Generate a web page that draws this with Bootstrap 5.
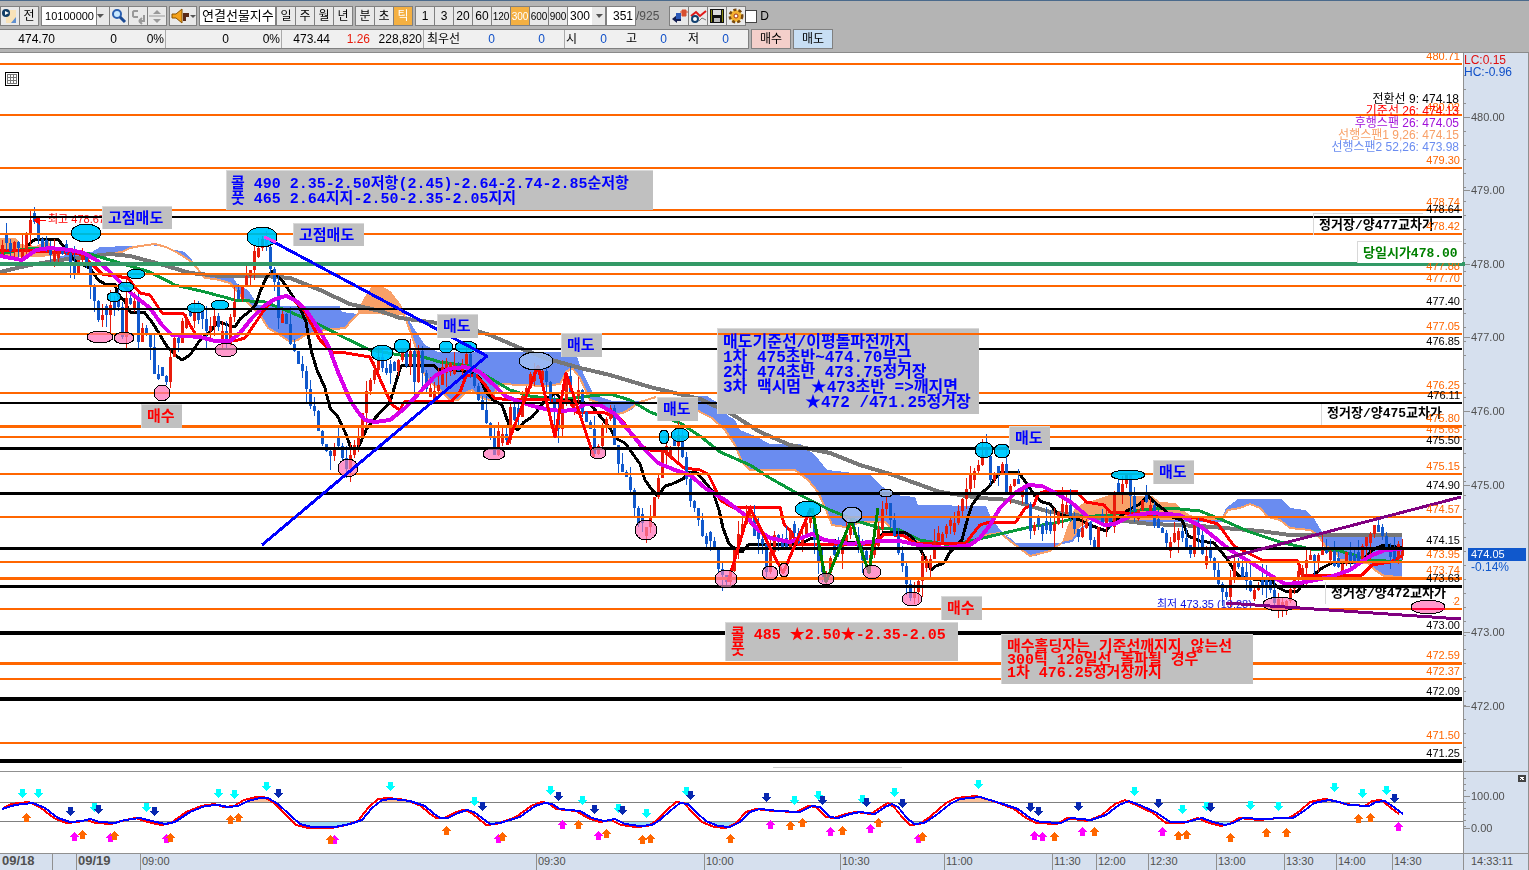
<!DOCTYPE html>
<html lang="ko">
<head>
<meta charset="utf-8">
<meta name="viewport" content="width=device-width, initial-scale=1">
<title>연결선물지수</title>
<link rel="stylesheet" href="https://cdn.jsdelivr.net/npm/bootstrap@5.3.0/dist/css/bootstrap.min.css">
<style>
body{font-family:"Liberation Sans Narrow","Liberation Sans","Noto Sans CJK KR",sans-serif;font-size:12px;line-height:16px;background:#fff;color:#000}
.topbar{background:#b4b4b4;border-top:1px solid #4a6a8c;border-bottom:1px solid #8a8a8a;height:53px;padding-top:5px}
.tools{height:20px;margin-bottom:3px}
.tools .btn,.tools input,.tools select,.tools .namebox{height:20px;border:1px solid #808080;border-radius:0;padding:0;font-size:12px;line-height:17px;color:#000;flex:none}
.tools .btn{background:#e9e9e9;width:20px;margin-right:-1px;overflow:hidden;white-space:nowrap}
.tools .btn.active{background:#f4b042;color:#fff}
.tools .btn.n3{font-size:10px}
.tools input[type=text]{background:#fff;text-align:right}
.tools .ic svg{display:block;margin:auto}
.tools .gp{margin-left:3px}
.tools input.code{width:56px;padding-right:2px;font-size:11px}
.tools .caret{width:14px;margin-left:-1px}
.tools .wide{width:28px}
.tools .namebox{width:77px;background:#fff;white-space:nowrap;overflow:hidden;font-size:13px;padding-left:2px}
.tools select{width:39px;padding-left:2px;appearance:none;background:linear-gradient(#e9e9e9,#e9e9e9) right/13px 100% no-repeat #fff}
.pick{position:relative}
.pick svg{position:absolute;right:3px;top:8px;pointer-events:none}
.tools .count{width:30px;padding-right:2px}
.total{color:#505050}
.tools .tick{width:12px;height:13px;border:1px solid #444;margin:0;border-radius:0;appearance:none;background:#fff}
.icoset{margin-left:10px}
.quote{display:grid;grid-template-columns:55px 62px 49px 63px 53px 48px 40px 54px 36px 35px 50px 20px 12px 30px 30px 30px 32px 30px 19px;width:749px;height:20px;background:#f0f0f0;border:1px solid #808080;border-left:0;line-height:18px;text-align:right;white-space:nowrap}
.sep{border-right:1px solid #aaa;padding-right:1px}
.up{color:#e81c0c}.dn{color:#1050c8}
.side{width:40px;height:20px;border:1px solid #808080;border-radius:0;padding:0;font-size:12px;line-height:17px;margin-left:2px}
.buy{background:#f4cfca}.sell{background:#c8dff4}
.plotcol{flex:1 1 0;min-width:0}
.axiscol{flex:0 0 66px;background:#d6e0ee}
svg{display:block}
.plotcol svg,.axiscol svg{width:100%;height:auto}
.px{font-size:11px}
.ind{font-size:12px}
.ax{font-size:11px;fill:#505050}
.day{font-size:13px;fill:#505050;font-weight:700}
.tag{font-family:"Liberation Mono","Noto Sans CJK KR",monospace;font-weight:700;white-space:pre}
</style>
<script src="https://cdn.jsdelivr.net/npm/bootstrap@5.3.0/dist/js/bootstrap.bundle.min.js"></script>
</head>
<body>
<header class="topbar">
<div class="tools d-flex align-items-center">
 <button class="btn ic" aria-label="메모"><svg width="18" height="18"><path d="M5 3h10v13H5z" fill="#f8e2b8"/><path d="M10 16l5-6v6z" fill="#5f8fd0"/><circle cx="5" cy="6" r="4" fill="#123e66"/><path d="M4 4l4 2-4 2z" fill="#fff"/></svg></button>
 <button class="btn">전</button>
 <input class="code gp" type="text" value="10100000" aria-label="종목코드">
 <button class="btn caret" aria-label="목록"><svg width="8" height="5"><path d="M0 0h7L3 4z" fill="#555"/></svg></button>
 <button class="btn ic" aria-label="검색"><svg width="16" height="16"><circle cx="6" cy="6" r="4" fill="#c8e8ff" stroke="#2a5fb0" stroke-width="2"/><path d="M9 9l5 5" stroke="#1b4a94" stroke-width="3"/></svg></button>
 <button class="btn ic" aria-label="되돌리기"><svg width="17" height="17"><path d="M8 3H4l-1 1v4l1 1h4M14 7v6H9m0 0l3-3m-3 3l3 3" fill="none" stroke="#999" stroke-width="2"/></svg></button>
 <button class="btn ic" aria-label="위아래"><svg width="16" height="17"><path d="M4 6l4-4 4 4zM4 11h8l-4 4z" fill="#999"/><path d="M0 8h16" stroke="#999"/></svg></button>
 <button class="btn ic wide gp" aria-label="소리"><svg width="26" height="16"><path d="M2 6h4l6-5v14l-6-5H2z" fill="#f4a21c" stroke="#8a5200"/><path d="M13 5h6v4h-3v4h-3z" fill="#5a2a18"/><path d="M20 7h6l-3 3z" fill="#555"/></svg></button>
 <div class="namebox gp">연결선물지수</div>
 <button class="btn">일</button><button class="btn">주</button><button class="btn">월</button><button class="btn">년</button>
 <button class="btn gp">분</button><button class="btn">초</button><button class="btn active">틱</button>
 <button class="btn gp">1</button><button class="btn">3</button><button class="btn">20</button><button class="btn">60</button><button class="btn n3">120</button><button class="btn n3 active">300</button><button class="btn n3">600</button><button class="btn n3">900</button>
 <div class="pick"><select aria-label="틱 단위"><option>300</option></select><svg width="7" height="4"><path d="M0 0h7L3 4z" fill="#555"/></svg></div>
 <input class="count" type="text" value="351" aria-label="봉 수"><span class="total">/925</span>
 <div class="icoset d-flex">
 <button class="btn ic" aria-label="비교"><svg width="17" height="16"><path d="M1 11l5-4v2h4v4H6v2z" fill="#111c50"/><path d="M5 5h5v6H5z" fill="#2a58b8"/><path d="M11 2h4v6h-4zM9 4h8" fill="#d85030" stroke="#d85030"/></svg></button>
 <button class="btn ic" aria-label="지표"><svg width="17" height="16"><path d="M1 8l5-4 4 4 6-5" fill="none" stroke="#e01818" stroke-width="2"/><circle cx="5" cy="11" r="3" fill="#fff" stroke="#124070" stroke-width="2"/><path d="M9 13l3-3 4 2" fill="none" stroke="#777"/></svg></button>
 <button class="btn ic" aria-label="저장"><svg width="16" height="16"><path d="M1 1h14v14H1z" fill="#111"/><path d="M4 2h8v5H4z" fill="#ddd"/><path d="M2 2h1v12H2zM13 2h1v12h-1z" fill="#8a8a10"/><path d="M5 10h6v4H5z" fill="#bbb"/></svg></button>
 <button class="btn ic" aria-label="설정"><svg width="16" height="16"><circle cx="8" cy="8" r="6" fill="#ffd24a" stroke="#7a4a10" stroke-width="3" stroke-dasharray="3 2"/><circle cx="8" cy="8" r="5" fill="#f4b030"/><circle cx="8" cy="8" r="2" fill="#fff" stroke="#a03010"/></svg></button>
 </div>
 <input class="tick gp" type="checkbox" id="dd"><label for="dd" class="gp">D</label>
</div>
<div class="d-flex">
 <div class="quote"><span>474.70</span><span>0</span><span class="sep">0%</span><span>0</span><span class="sep">0%</span><span>473.44</span><span class="up">1.26</span><span class="sep">228,820</span><span>최우선</span><span class="dn">0</span><span class="dn">0</span><span class="sep"></span><span>시</span><span class="dn">0</span><span>고</span><span class="dn">0</span><span>저</span><span class="dn">0</span><span></span></div>
 <button class="side buy">매수</button><button class="side sell">매도</button>
</div>
</header>
<main>
 <div class="d-flex"><div class="plotcol"><svg id="plot" viewBox="0 53 1463 718" shape-rendering="crispEdges"></svg></div><div class="axiscol"><svg id="paxis" viewBox="1463 53 66 718" shape-rendering="crispEdges"></svg></div></div>
 <div class="d-flex"><div class="plotcol"><svg id="osc" viewBox="0 771 1463 82" shape-rendering="crispEdges"></svg></div><div class="axiscol"><svg id="oaxis" viewBox="1463 771 66 82" shape-rendering="crispEdges"></svg></div></div>
 <div class="d-flex"><div class="plotcol"><svg id="time" viewBox="0 853 1463 17" shape-rendering="crispEdges"></svg></div><div class="axiscol"><svg id="clock" viewBox="1463 853 66 17" shape-rendering="crispEdges"></svg></div></div>
</main>
<script>
const O='#ff6600',K='#000',B='#0000ff',R='#ff0000';
const put=(id,s)=>document.getElementById(id).innerHTML=s;
const pl=(p,c,w)=>`<polyline points="${p}" fill="none" stroke="${c}" stroke-width="${w}" stroke-linejoin="round"/>`;
const pg=(p,c)=>`<polygon points="${p}" fill="${c}"/>`;
const tx=(x,y,t,c,k='px',a='start')=>`<text x="${x}" y="${y}" class="${k}" fill="${c}" text-anchor="${a}">${t}</text>`;
const ln=(x1,y1,x2,y2,c,w)=>`<line x1="${x1}" y1="${y1}" x2="${x2}" y2="${y2}" stroke="${c}" stroke-width="${w}"/>`;
const BL='#6a8cf0',SA='#f8a068';
let s='';
// Ichimoku cloud
s+=pg('0,238 16,238 20,244 36,246 48,240 54,250 60,256 0,258',SA);
s+=pg('60,256 92,252 100,247 160,245 170,249 185,252 192,260 196,268 204,274 215,276 232,276 238,285 248,290 258,305 300,306 340,306 342,312 358,314 352,320 345,328 325,330 305,335 298,340 290,342 280,335 268,328 260,315 250,305 240,295 230,283 215,279 205,278 192,262 178,253 166,247 150,245 140,246 130,248 122,252 100,256 60,258',BL);
s+=pg('358,314 364,300 372,288 380,286 390,292 400,305 406,315',SA);
s+=pg('406,315 415,330 425,345 438,352 575,352 584,375 594,395 612,401 640,401 632,410 625,412 612,416 600,403 590,400 580,378 572,368 566,372 560,384 545,386 500,384 495,395 490,400 482,398 472,390 465,393 458,400 450,400 440,390 430,382 422,370 415,345 410,330',BL);
s+=pg('660,397 707,396 718,403 727,415 735,420 740,430 755,436 770,444 800,444 815,455 827,470 845,472 870,475 880,485 895,495 915,497 918,505 986,506 990,515 1000,530 1010,537 1000,533 985,535 975,543 925,543 910,540 895,532 885,522 862,522 845,527 832,525 826,510 818,492 808,480 795,470 750,470 742,462 735,445 725,430 712,418 700,412',BL);
s+=pg('1062,542 1068,525 1075,510 1082,505 1095,502 1110,495 1152,496 1160,502 1175,503 1180,508 1190,515 1205,519 1218,521 1130,522 1090,520 1080,527 1072,541',SA);
s+=pg('1000,533 1010,538 1015,543 1062,543 1050,550 1036,556 1030,556 1022,550 1010,541',BL);
s+=pg('1222,518 1226,508 1238,499 1282,499 1290,508 1305,510 1315,520 1322,532 1326,536 1402,536 1402,577 1384,576 1375,570 1368,563 1340,560 1335,550 1325,546 1318,535 1310,530 1290,528 1280,520 1268,517 1260,508 1250,504 1240,508 1228,510',BL);
s+=pl('100,255 122,252 130,248 140,246 155,244 166,247 178,253 192,262 205,278 215,279 230,283 240,295 250,305 260,315 268,328 280,335 290,342 298,340 305,335 325,330 345,328 352,320 358,314 364,300 372,288 380,286 390,292 400,305 408,325 415,345 422,370 430,382 440,390 450,400 458,400 465,393 472,390 482,398 490,400 500,384 545,386 560,384 566,372 572,368 580,378 590,400 600,403 612,416 625,412 640,402 656,397',SA,2);
s+=pl('690,405 700,412 712,418 725,430 735,445 742,462 750,470 795,470 808,480 818,492 826,510 832,525 845,527 862,522 885,522 895,532 910,540 925,543 975,543 985,535 1000,533 1010,541 1022,550 1030,556 1050,551 1066,540 1075,510 1082,505 1110,496',SA,2);
s+=pl('1180,520 1222,519 1228,510 1240,508 1250,504 1260,508 1268,517 1280,520 1290,528 1310,530 1318,535 1325,546 1335,550 1340,560 1368,563 1375,570 1384,576 1402,577',SA,2);
s+=pl('1062,543 1072,541 1082,528 1092,521 1222,521',BL,2);
// moving averages
s+=pl('0,272 30,265 60,260 110,254 130,256 160,264 190,273 220,276 265,276 290,278 320,290 350,304 380,311 400,318 430,322 460,326 490,335 520,348 545,358 580,368 610,375 650,387 700,399 730,413 760,432 790,445 830,453 860,465 890,474 940,492 980,498 1010,500 1050,512 1100,518 1150,524 1200,526 1260,531 1290,535 1402,535','#777',4);
s+=pl('0,254 30,248 60,248 90,254 120,263 150,272 175,285 205,292 235,300 265,302 290,312 320,325 345,338 370,350 400,355 420,356 440,362 470,366 490,378 510,390 530,396 560,400 590,396 610,394 630,400 650,412 680,423 700,436 720,452 750,465 770,478 800,495 830,510 860,522 880,528 900,530 920,540 950,545 975,540 1000,534 1030,527 1060,522 1080,517 1110,515 1140,510 1170,508 1200,511 1220,519 1250,532 1280,542 1310,549 1340,551 1370,560 1402,562','#0a9a3c',3);
s+=pl('28,245 34,240 58,239 66,250 76,262 90,268 98,280 105,284 115,284 118,295 124,300 130,312 144,312 152,322 160,335 166,345 175,355 182,360 190,355 200,340 210,332 218,322 235,327 240,319 250,311 256,304 260,292 266,278 272,271 276,274 284,283 292,295 300,308 306,322 311,350 317,370 325,388 330,408 338,417 345,432 351,448 358,448 366,430 376,417 390,402 395,385 401,366 434,365 437,369 448,369 470,372 480,378 486,392 493,400 502,405 509,425 518,430 524,422 532,417 538,410 546,399 556,393 562,400 576,401 590,404 600,416 610,428 615,438 625,443 630,450 640,464 645,480 652,490 658,496 665,486 672,484 683,479 690,472 697,473 704,481 713,492 719,510 723,528 729,544 737,550 742,552 748,545 800,544 812,538 825,540 870,544 876,541 884,532 904,532 912,537 920,549 926,560 931,570 936,566 944,563 950,552 962,540 968,517 972,505 980,494 988,488 994,480 1000,473 1018,472 1028,485 1034,495 1042,502 1050,504 1058,514 1080,520 1090,525 1106,531 1114,522 1128,510 1140,504 1148,496 1154,502 1162,508 1172,517 1182,520 1188,536 1200,541 1214,543 1220,550 1228,560 1235,572 1240,577 1260,580 1272,581 1277,587 1287,592 1298,591 1302,584 1310,578 1322,568 1334,562 1360,563 1372,550 1384,545 1402,548',K,3);
s+=pl('0,250 20,250 50,252 80,254 92,264 102,274 128,278 140,293 150,295 162,313 184,314 190,325 196,335 210,340 235,341 245,338 256,322 264,310 272,301 282,296 292,298 304,310 312,325 320,340 332,352 346,353 370,357 376,370 384,388 392,405 400,410 404,402 452,401 460,392 466,376 476,375 486,386 494,398 510,400 540,399 570,402 576,412 605,413 622,420 640,445 650,450 664,450 672,458 684,468 700,470 708,474 714,486 720,500 732,507 780,507 784,524 792,533 797,544 876,544 884,534 904,536 915,543 965,544 972,535 980,525 990,522 1016,522 1025,508 1034,505 1038,494 1046,491 1076,491 1086,502 1104,505 1110,512 1140,514 1196,518 1218,524 1226,535 1234,546 1248,553 1262,560 1298,561 1302,575 1362,575 1372,565 1390,562 1402,556',R,3);
// candles, one every 4px, following the price track
const track=[2,250,6,243,10,250,14,240,22,250,26,230,30,222,34,226,40,240,46,250,54,252,62,250,70,262,76,275,80,255,86,262,92,300,98,318,106,320,112,305,118,310,122,335,126,300,134,300,138,345,142,325,150,345,154,370,160,380,166,378,170,360,174,335,178,340,182,325,192,315,200,315,206,330,212,325,216,315,220,330,226,345,230,315,236,300,240,290,248,275,252,262,256,248,262,244,266,250,270,265,274,280,278,315,282,310,286,320,290,340,295,360,302,370,308,395,314,415,320,440,326,455,340,450,346,465,352,445,356,450,360,420,364,400,368,380,374,370,378,360,384,370,392,378,398,360,402,350,406,370,410,350,414,380,418,350,424,390,430,385,436,390,440,375,448,355,452,370,460,370,466,355,470,370,476,400,484,410,490,440,494,455,498,435,506,435,510,410,518,420,524,390,530,375,538,365,546,385,552,400,558,430,562,405,566,375,572,400,578,395,584,415,590,430,594,455,600,440,606,415,610,410,614,450,620,465,626,480,632,500,638,520,644,528,650,515,656,490,660,465,664,440,668,450,674,450,680,435,684,470,690,500,696,520,702,535,710,545,718,565,724,580,730,575,734,545,740,535,748,510,756,545,762,540,766,570,770,555,776,530,784,560,788,540,792,525,800,550,804,525,810,515,814,540,820,575,826,570,832,545,836,565,842,545,850,525,856,545,862,560,868,560,874,550,880,520,884,500,890,520,896,545,902,570,908,595,914,595,918,580,922,555,928,560,936,540,942,530,950,520,956,525,960,505,968,480,976,470,982,452,986,460,990,480,996,480,1002,460,1006,490,1014,480,1020,480,1026,500,1030,530,1036,525,1044,530,1052,525,1060,510,1068,505,1074,530,1080,545,1084,515,1090,545,1094,545,1098,525,1104,520,1110,525,1114,495,1120,490,1126,480,1132,500,1136,515,1142,500,1150,500,1154,530,1162,530,1168,545,1172,545,1176,520,1182,540,1190,550,1194,525,1198,540,1202,555,1208,560,1214,565,1218,580,1226,598,1230,580,1234,560,1238,570,1250,590,1256,585,1264,590,1268,580,1274,598,1284,600,1290,590,1296,580,1300,570,1306,560,1312,560,1318,550,1328,550,1334,565,1340,570,1346,550,1352,560,1358,560,1362,550,1368,535,1374,525,1380,535,1388,555,1394,560,1398,545,1402,550];
let ti=0,seed=7;const rnd=()=>(seed=(seed*16807)%2147483647)/2147483647;
const at=x=>{while(ti<track.length-4&&track[ti+2]<x)ti+=2;const a=track[ti],b=track[ti+1],c=track[ti+2],d=track[ti+3];return b+(d-b)*Math.max(0,Math.min(1,(x-a)/(c-a)))};
let prev=255;
for(let x=2;x<=1402;x+=4){
 let c=Math.round(at(x)+(rnd()-.5)*10),o=prev;if(Math.abs(o-c)<5)o=c+(rnd()>.5?9:-9);
 const col=c<o?'#e81c0c':'#1058cc',t=Math.min(o,c),h=Math.abs(o-c);
 const w1=Math.round(rnd()*rnd()*20),w2=Math.round(rnd()*rnd()*20);
 s+=`<path fill="${col}" d="M${x-1} ${t}h3v${h}h-3zM${x} ${t-w1}h1v${h+w1+w2}h-1z"/>`;prev=c;
}
s+=pl('0,256 22,260 36,250 50,248 70,250 84,253 96,260 108,270 120,282 132,294 150,308 162,325 172,335 200,337 215,341 230,341 240,333 252,318 264,306 275,299 286,296 295,300 306,310 316,325 328,345 338,372 350,400 358,412 365,420 375,422 390,420 405,408 420,392 435,376 448,369 465,367 480,372 495,386 505,396 520,402 540,408 560,411 575,410 585,404 600,405 615,414 630,432 645,450 658,463 675,470 690,475 705,488 725,500 745,515 758,530 770,538 790,542 812,534 825,540 850,544 880,541 900,541 918,545 945,548 970,545 980,538 990,525 1000,508 1015,493 1028,485 1042,486 1056,493 1072,503 1088,517 1104,525 1115,524 1130,516 1150,513 1180,515 1200,526 1214,537 1230,550 1250,562 1270,575 1285,584 1300,583 1330,577 1350,570 1370,556 1385,550 1402,549','#d800e8',4);
// high / low marks
s+=pg('33,220 40,216 40,225',R)+ln(38,220.5,46,220.5,R,1)+tx(48,223,'최고 478.67',R);
s+=tx(1157,608,'최저 473.35 (13:28)','#1010dd');
// horizontal levels: y, colour, thickness, price
const lv=[[64,O,2,'480.71'],[115,O,2,'480.02'],[168,O,2,'479.30'],[210,O,2,'478.74'],[217,K,2,'478.64'],[234,O,2,'478.42'],[274,O,2,'477.88'],[286,O,2,'477.70'],[309,K,2,'477.40'],[334,O,2,'477.05'],[349,K,2,'476.85'],[393,O,2,'476.25'],[403,K,2,'476.11'],[426,O,3,'475.80'],[437,O,2,'475.65'],[448,K,3,'475.50'],[474,O,2,'475.15'],[493,K,3,'474.90'],[517,O,2,'474.57'],[548,K,3,'474.15'],[562,O,2,'473.95'],[578,O,3,'473.74'],[586,K,3,'473.63'],[609,O,2,'473.42'],[633,K,4,'473.00'],[663,O,3,'472.59'],[679,O,2,'472.37'],[699,K,4,'472.09'],[743,O,2,'471.50'],[761,K,4,'471.25']];
for(const [y,c,w] of lv)s+=`<rect x="0" y="${y-Math.floor(w/2)}" width="1462" height="${w}" fill="${c}"/>`;
s+=`<rect x="0" y="262" width="1463" height="4" fill="#339966"/>`;
// annotation marks
const el=(l,c)=>l.map(e=>`<ellipse cx="${e[0]}" cy="${e[1]}" rx="${e[2]}" ry="${e[3]}" fill="${c}" stroke="#000" style="mix-blend-mode:multiply"/>`).join('');
const under=l=>l.map(e=>`<ellipse cx="${e[0]}" cy="${e[1]}" rx="${e[2]}" ry="${e[3]}" fill="#fff" fill-opacity=".6"/>`).join('');
const cy=[[86,233,15,9],[262,237,15,10],[136,274,9,5],[126,287,8,5],[114,297,7,5],[196,308,9,5],[220,305,9,5],[382,353,11,8],[402,346,8,7],[446,347,7,6],[466,347,11,6],[664,437,5,7],[680,435,9,7],[808,509,13,8],[984,450,9,8],[1002,451,8,7],[1128,475,17,5]];
const lt=[[536,361,17,9],[852,515,10,8],[886,493,7,4]];
const pk=[[100,337,13,6],[124,338,10,6],[162,393,8,8],[226,350,11,7],[348,468,10,9],[494,454,11,6],[598,453,8,6],[646,530,11,10],[726,579,11,9],[770,573,8,7],[784,570,5,7],[826,579,8,6],[872,572,9,7],[912,599,10,7],[1280,604,17,7]];
const last=[[1428,607,17,7]];
s+=pl('507,445 538,366 555,437 566,373 594,457',R,3)+pl('728,582 750,508 783,573 811,508',R,3)+pl('812,508 826,582 851,520 869,573 878,508','#008000',3);
s+=under(cy)+under(cy)+under(lt)+under(lt)+el(cy,'#00ccff')+el(lt,'#a8c4f4')+under(pk)+el(pk,'#ff99cc');
s+=pl('270,240 487,356 262,545',B,3)+pl('1227,558 1461,497','#800080',3)+pl('1226,603 1461,619','#800080',3);
s+=ln(264,237,276,242,'#f040f0',3);
// level tags and text
const box=(x,y,w,h,f='#c0c0c0')=>`<rect x="${x}" y="${y}" width="${w}" height="${h}" fill="${f}"/><path d="M${x+.5} ${y+h}V${y+.5}H${x+w}" fill="none" stroke="#d8d8d8"/>`;
const tag=(x,y,t,c,z)=>`<text x="${x}" y="${y}" class="tag" fill="${c}" font-size="${z}">${t}</text>`;
s+=`<rect x="1314" y="218" width="110" height="15" fill="#fff"/><path d="M1313.500 235V213.500H1423" fill="none" stroke="#d8d8d8"/>`+tag(1319,229,'정거장/양477교차가',K,13);
s+=`<rect x="1322" y="404" width="125" height="20" fill="#fff"/>`+ln(1321.5,404,1321.5,425,'#d8d8d8',1)+tag(1327,417,'정거장/양475교차가',K,13);
s+=tx(1460,605,'473.42',O,'px','end')+`<rect x="1326" y="588" width="127" height="20" fill="#fff"/>`+ln(1325.5,582,1325.5,604,'#d8d8d8',1)+tag(1331,597,'정거장/양472교차가',K,13);
s+=el(last,'#ff99cc')+`<rect x="1412" y="608" width="33" height="2" fill="#ff0033"/>`;
for(const [y,c,w,t] of lv)if(y!=609)s+=tx(1460,y-4,t,c,'px','end');
s+=box(1357,241,105,22,'#fff')+tag(1363,257,'당일시가478.00','#008000',13);
[['전환선 9: 474.18',K],['기준선 26: 474.13',R],['후행스팬 26: 474.05','#a010d8'],['선행스팬1 9,26: 474.15',SA],['선행스팬2 52,26: 473.98',BL]].forEach((a,i)=>s+=tx(1459,103+12*i,a[0],a[1],'ind','end'));
// notes
s+=box(226,170,427,40)+tag(231,188,'콜 490 2.35-2.50저항(2.45)-2.64-2.74-2.85순저항',B,15)+tag(231,203,'풋 465 2.64지지-2.50-2.35-2.05지지',B,15);
[[102,206,70],[293,223,71]].forEach(a=>s+=box(a[0],a[1],a[2],23)+tag(a[0]+6,a[1]+17,'고점매도',B,15));
[[437,314],[561,333],[657,397],[1009,426],[1153,460]].forEach(a=>s+=box(a[0],a[1],41,24)+tag(a[0]+6,a[1]+17,'매도',B,15));
[[141,404],[941,596]].forEach(a=>s+=box(a[0],a[1],41,24)+tag(a[0]+6,a[1]+17,'매수',R,15));
s+=box(717,328,262,86)+ln(718,334,979,334,O,2);
['매도기준선/이평돌파전까지','1차 475초반~474.70부근','2차 474초반 473.75정거장','3차 맥시멈 ★473초반 =&gt;깨지면'].forEach((t,i)=>s+=tag(723,347+15*i,t,B,16));
s+=tag(805,407,'★472 /471.25정거장',B,16);
s+=box(725,622,233,39)+tag(731,639,'콜 485 ★2.50★-2.35-2.05',R,15)+tag(731,654,'풋',R,15);
s+=box(1001,634,252,50)+tag(1007,651,'매수홀딩자는 기준선깨지지 않는선',R,15)+tag(1007,664,'300틱 120일선 돌파될 경우',R,15)+tag(1007,677,'1차 476.25정거장까지',R,15);
s+=`<rect x="5.5" y="72.5" width="13" height="13" fill="#fff" stroke="#000"/><path d="M7.500 74.500h9v9h-9zM7.500 77.500h9M7.500 80.500h9M10.500 74.500v9M13.500 74.500v9" fill="none" stroke="#777"/>`;
s+=ln(773,767.5,902,767.5,'#ccc',1);
put('plot',s);
// price axis
s=ln(1463.5,53,1463.5,771,'#909090',1)+ln(1528.5,53,1528.5,771,'#909090',1);
for(let y=75;y<771;y+=14)s+=ln(1464,y+.5,1466,y+.5,'#909090',1);
[['480.00',117],['479.00',190],['478.00',264],['477.00',337],['476.00',411],['475.00',485],['473.00',632],['472.00',706]].forEach(a=>s+=ln(1464,a[1]+.5,1470,a[1]+.5,'#909090',1)+tx(1471,a[1]+4,a[0],'#505050','ax'));
s+=`<rect x="1463" y="262" width="2" height="4" fill="#339966"/>`+tx(1464,64,'LC:0.15','#e01010','ind')+tx(1464,76,'HC:-0.96','#1050c8','ind')+`<rect x="1468" y="548" width="58" height="13" fill="#1058cc"/>`+tx(1471,558,'474.05','#fff')+tx(1471,571,'-0.14%','#1058cc','ind');
put('paxis',s);
// oscillator
const bl=[2,809,15,805,33,803,45,808,58,818,70,822,82,821,90,819,100,822,115,823,125,820,140,818,152,821,165,824,175,822,190,812,205,806,218,805,228,807,238,806,248,801,260,798,268,798,278,804,290,815,300,824,312,827,335,827,350,824,362,820,372,808,382,800,392,799,410,801,425,806,433,813,440,818,448,818,458,813,467,810,474,812,482,818,490,824,500,823,520,817,535,806,545,803,552,804,560,809,580,811,592,818,604,821,615,819,625,824,640,826,652,825,660,820,670,811,680,803,688,804,697,813,706,821,718,826,730,827,740,822,750,812,760,809,778,811,800,812,812,806,820,807,830,817,838,818,850,814,860,812,875,814,885,807,892,804,898,807,906,817,914,824,924,823,935,816,950,804,960,799,980,797,1000,803,1018,809,1030,818,1040,822,1060,823,1070,818,1090,820,1105,815,1118,805,1127,801,1140,806,1155,813,1168,822,1185,822,1200,818,1210,822,1222,825,1230,823,1240,818,1260,819,1280,818,1290,818,1300,811,1310,803,1325,800,1335,802,1345,805,1365,806,1372,802,1380,801,1390,808,1398,814];
let bp='',rp='';
for(let i=0;i<bl.length;i+=2){let x=bl[i];if(x>1000)x=Math.round(1000+(x-1000)*1.012);bp+=x+','+bl[i+1]+' ';rp+=Math.max(2,x-4)+','+Math.round(812+(bl[i+1]-812)*1.08)+' '}
s='<defs><clipPath id="lo"><path d="M0 822h1463v30H0z"/></clipPath><clipPath id="hi"><path d="M0 771h1463v31H0z"/></clipPath></defs>';
s+=`<polygon clip-path="url(#lo)" points="0,822 ${bp} 1402,822" fill="#a0dcf4"/><polygon clip-path="url(#hi)" points="0,802 ${bp} 1402,802" fill="#f8c09a"/>`;
s+=ln(0,802.5,1463,802.5,'#808080',1)+ln(0,821.5,1463,821.5,'#808080',1)+pl(rp,R,2)+pl(bp,B,2);
const ar=(l,c,d)=>{for(let i=0;i<l.length;i+=2){const x=l[i],y=l[i+1];s+=`<path fill="${c}" d="M${x-2} ${y-4*d}h5v${4*d}h2l-5 ${5*d}l-5 ${-5*d}h3z"/>`}};
ar([22,793,38,793,94,807,146,807,218,793,234,794,266,786,390,786,474,801,550,790,582,800,618,808,646,813,686,791,794,800,818,795,862,799,894,792,978,784,1134,791,1182,809,1206,806,1250,805,1278,806,1334,787,1362,793,1386,790],'#00ffff',1);
ar([70,811,98,809,154,811,278,793,482,806,558,796,594,809,622,810,690,795,766,797,822,800,866,802,902,803,1030,807,1038,811,1078,806,1158,803,1210,807,1394,798],'#0828b0',1);
ar([74,837,110,838,166,839,334,840,498,839,562,825,598,836,770,825,830,832,870,829,918,839,1034,836,1042,837,1082,832,1162,832,1398,827],'#ff00ff',-1);
ar([26,818,82,835,114,836,170,838,230,820,238,818,330,840,446,831,502,837,578,825,606,834,642,840,650,839,730,839,790,826,802,823,842,831,878,823,922,837,1054,837,1094,832,1178,836,1186,835,1230,838,1266,833,1286,833,1358,819,1370,818],O,-1);
s+=ln(0,771.5,1463,771.5,'#909090',1);
put('osc',s);
s=ln(1463.5,771,1463.5,853,'#909090',1)+ln(1528.5,771,1528.5,853,'#909090',1)+ln(1463,771.5,1529,771.5,'#909090',1);
for(let y=778;y<830;y+=6)s+=ln(1464,y+.5,1466,y+.5,'#909090',1);
s+=ln(1464,796.5,1470,796.5,'#909090',1)+ln(1464,828.5,1470,828.5,'#909090',1)+tx(1471,800,'100.00','#505050','ax')+tx(1471,832,'0.00','#505050','ax');
s+=`<rect x="1518" y="775" width="8" height="7" fill="#444"/><path d="M1520 777l4 3M1524 777l-4 3" stroke="#fff"/>`;
put('oaxis',s);
// time axis
s='<rect x="0" y="853" width="1463" height="17" fill="#d6e0ee"/>'+ln(0,853.5,1463,853.5,'#909090',1);
[[52,''],[76,''],[140,'09:00'],[536,'09:30'],[704,'10:00'],[840,'10:30'],[944,'11:00'],[1052,'11:30'],[1096,'12:00'],[1148,'12:30'],[1216,'13:00'],[1284,'13:30'],[1336,'14:00'],[1392,'14:30']].forEach(a=>s+=ln(a[0]+.5,853,a[0]+.5,870,'#909090',1)+tx(a[0]+2,865,a[1],'#505050','ax'));
s+=`<text x="2" y="865" class="day">09/18</text><text x="78" y="865" class="day">09/19</text>`;
put('time',s);
put('clock',ln(1463,853.5,1529,853.5,'#909090',1)+ln(1463.5,853,1463.5,870,'#909090',1)+ln(1528.5,853,1528.5,870,'#909090',1)+tx(1471,865,'14:33:11','#505050','ax'));
</script>
</body>
</html>
